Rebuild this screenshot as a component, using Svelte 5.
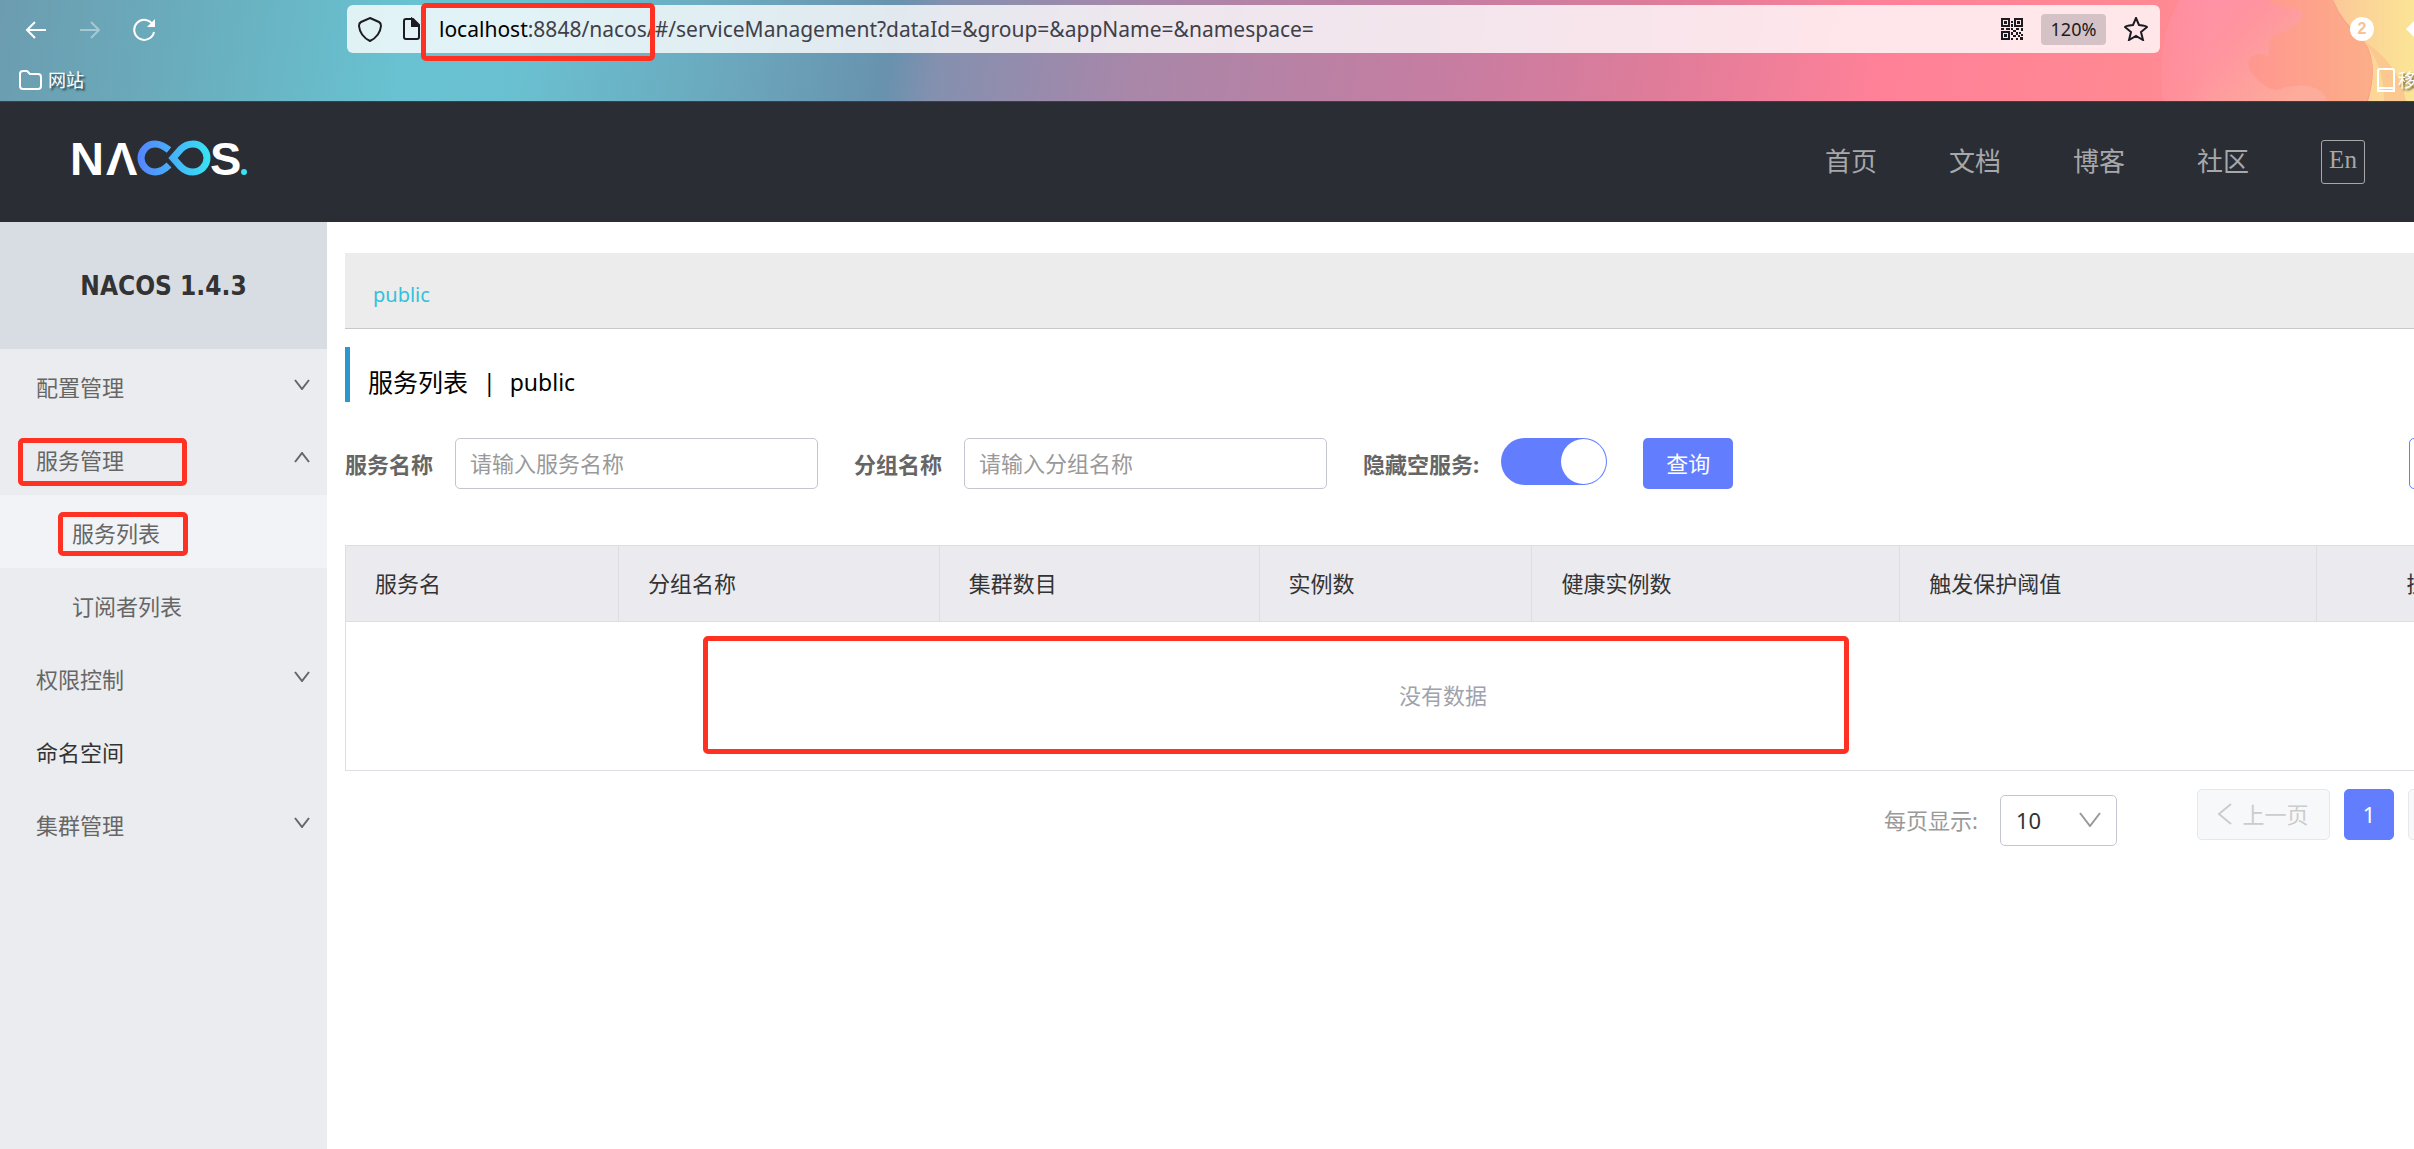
<script lang="ts">
  let serviceName = '';
  let groupName = '';
  let hideEmpty = true;
  let pageSize = '10';

  const navLinks = ['首页', '文档', '博客', '社区'];

  const menu = [
    { title: '配置管理', open: false, children: [] },
    {
      title: '服务管理',
      open: true,
      marked: true,
      children: [
        { title: '服务列表', active: true },
        { title: '订阅者列表', active: false }
      ]
    },
    { title: '权限控制', open: false, children: [] },
    { title: '命名空间', link: true, children: [] },
    { title: '集群管理', open: false, children: [] }
  ];

  const columns = [
    { title: '服务名', size: 273 },
    { title: '分组名称', size: 321 },
    { title: '集群数目', size: 320 },
    { title: '实例数', size: 273 },
    { title: '健康实例数', size: 368 },
    { title: '触发保护阈值', size: 417 },
    { title: '操作', size: 224, center: true }
  ];
  const total = columns.reduce((sum, c) => sum + c.size, 0);
</script>

<div class="page">
  <div class="browser">
    <svg class="theme" viewBox="0 0 284 101" preserveAspectRatio="none" aria-hidden="true">
      <defs>
        <linearGradient id="fur" x1="30" y1="0" x2="150" y2="110" gradientUnits="userSpaceOnUse">
          <stop offset="0" stop-color="#ff8fab" />
          <stop offset="0.5" stop-color="#ff959f" />
          <stop offset="1" stop-color="#fdab9a" />
        </linearGradient>
        <linearGradient id="furEdge" x1="26" y1="0" x2="80" y2="0" gradientUnits="userSpaceOnUse">
          <stop offset="0" stop-color="#ff8b94" />
          <stop offset="1" stop-color="#ff8b94" stop-opacity="0" />
        </linearGradient>
        <linearGradient id="body" x1="0" y1="0" x2="1" y2="0">
          <stop offset="0" stop-color="#ff9590" />
          <stop offset="1" stop-color="#fcae88" />
        </linearGradient>
        <linearGradient id="glow" x1="0" y1="0" x2="1" y2="0">
          <stop offset="0" stop-color="#fbc898" />
          <stop offset="1" stop-color="#fbe596" />
        </linearGradient>
      </defs>
      <path d="M203 0H284V101H238Q250 60 232 38Q212 22 203 0Z" fill="url(#glow)" />
      <path d="M232 40Q254 62 254 101H276Q268 62 232 40Z" fill="#fbc98f" />
      <path d="M120 0H203Q212 24 232 38Q250 62 237 101H110Z" fill="url(#body)" />
      <path d="M50 0H138Q146 8 164 8Q176 10 171 19Q166 27 143 36Q138 42 139 57Q130 50 121 57Q114 66 126 78Q137 90 147 90Q162 84 178 86Q194 89 197 101H33Q26 40 50 0Z" fill="url(#fur)" />
      <path d="M50 0H90V101H33Q26 40 50 0Z" fill="url(#furEdge)" opacity="0.7" />
    </svg>

    <div class="nav-row">
      <div class="nav-buttons">
        <button type="button" aria-label="Back">
          <svg width="22" height="20" viewBox="0 0 22 20"><path d="M21 10H2M10 2L2 10L10 18" /></svg>
        </button>
        <button type="button" aria-label="Forward" class="dim">
          <svg width="22" height="20" viewBox="0 0 22 20"><path d="M1 10H20M12 2L20 10L12 18" /></svg>
        </button>
        <button type="button" aria-label="Reload">
          <svg width="24" height="24" viewBox="0 0 24 24"><path d="M20 7A10 10 0 1 0 21 14" /><path d="M22 1V9H14Z" fill="#fff" stroke="none" /></svg>
        </button>
      </div>

      <div class="url-bar">
        <svg width="24" height="26" viewBox="0 0 24 26"><path d="M12 2L21 6Q23 7 23 10Q22 20 12 25Q2 20 1 10Q1 7 3 6Z" /></svg>
        <svg class="doc" width="18" height="24" viewBox="0 0 18 24"><path d="M11 2H4Q2 2 2 4V20Q2 22 4 22H15Q17 22 17 20V8Z" /><path d="M10 2V9H17Z" fill="#1c1b22" /></svg>
        <div class="address" role="textbox" tabindex="0" aria-label="Address"><b>localhost</b>:8848/nacos/#/serviceManagement?dataId=&amp;group=&amp;appName=&amp;namespace=</div>
        <span class="mark mark-url"></span>
        <button type="button" aria-label="QR code">
          <svg width="22" height="22" viewBox="0 0 22 22">
            <path d="M1 1H8V8H1ZM14 1H21V8H14ZM1 14H8V21H1Z" />
            <path class="solid" d="M3 3h3v3h-3zM16 3h3v3h-3zM3 16h3v3h-3zM10 3h2v2h-2zM10 6h2v3h-2zM0 10h3v2h-3zM5 10h4v2h-4zM10 10h2v2h-2zM12 12h3v2h-3zM15 10h3v2h-3zM20 10h2v3h-2zM10 14h2v3h-2zM12 17h3v2h-3zM15 14h2v3h-2zM18 14h2v2h-2zM20 16h2v2h-2zM17 17h2v2h-2zM10 20h2v2h-2zM15 20h2v2h-2zM19 19h3v3h-3z" />
          </svg>
        </button>
        <button type="button" class="zoom">120%</button>
        <button type="button" aria-label="Bookmark this page">
          <svg width="24" height="24" viewBox="0 0 24 24"><path d="M12 1L15 8Q23 9 23 10L17 15L19 23L12 19L5 23L7 15L1 10Q1 9 9 8Z" /></svg>
        </button>
      </div>

      <div class="extras">
        <span class="badge">2</span>
        <svg width="22" height="22" viewBox="0 0 22 22"><path d="M11 0L22 11L11 22L0 11Z" fill="#fff" stroke="none" /></svg>
      </div>
    </div>

    <div class="bookmarks">
      <a href="#sites">
        <svg width="23" height="20" viewBox="0 0 23 20"><path d="M1 4Q1 1 4 1H8L11 4H19Q22 4 22 7V16Q22 19 19 19H4Q1 19 1 16Z" /></svg>
        网站
      </a>
      <a href="#mobile" class="mobile">
        <svg width="18" height="24" viewBox="0 0 18 24"><rect x="1" y="1" width="16" height="22" rx="2" /><path d="M1 20H17V23H1Z" /></svg>
        移动设备
      </a>
    </div>
  </div>

  <header>
    <a href="#home" class="logo" aria-label="Nacos">
      <svg width="176" height="38" viewBox="0 0 176 38">
        <defs>
          <linearGradient id="loop" x1="66" y1="0" x2="138" y2="0" gradientUnits="userSpaceOnUse">
            <stop offset="0" stop-color="#5584ff" />
            <stop offset="1" stop-color="#37e3f3" />
          </linearGradient>
        </defs>
        <text x="-2" y="35">N</text>
        <text x="34" y="35">Λ</text>
        <path d="M97 10C92 6 88 4 83 4C75 4 69 11 69 18C69 25 75 32 83 32C88 32 92 30 97 25" />
        <path d="M101 18L109 9C112 6 116 4 121 4C129 4 135 11 135 18C135 25 129 32 121 32C116 32 112 30 109 27Z" />
        <text x="138" y="35">S</text>
        <circle cx="172" cy="32" r="3" />
      </svg>
    </a>
    <nav>
      {#each navLinks as link}
        <a href="#nav">{link}</a>
      {/each}
      <button type="button" class="lang">En</button>
    </nav>
  </header>

  <div class="body">
    <aside>
      <h1>NACOS 1.4.3</h1>
      <ul>
        {#each menu as item}
          <li>
            {#if item.link}
              <a href="#namespace" class="row dark"><span>{item.title}</span></a>
            {:else}
              <button type="button" class="row">
                <span>{item.title}</span>
                <svg class:up={item.open} width="16" height="11" viewBox="0 0 16 11"><path d="M1 1L8 10L15 1" /></svg>
                {#if item.marked}<i class="mark mark-group"></i>{/if}
              </button>
            {/if}
            {#each item.children as child}
              <a href="#service" class="row child" class:active={child.active}>
                <span>{child.title}</span>
                {#if child.active}<i class="mark mark-item"></i>{/if}
              </a>
            {/each}
          </li>
        {/each}
      </ul>
    </aside>

    <main>
      <div class="content">
        <div class="namespaces"><a href="#public">public</a></div>

        <h2>服务列表<span class="bar">|</span><span class="latin">public</span></h2>

        <form on:submit|preventDefault>
          <label for="service">服务名称</label>
          <input id="service" type="text" placeholder="请输入服务名称" bind:value={serviceName} />
          <label for="group">分组名称</label>
          <input id="group" type="text" placeholder="请输入分组名称" bind:value={groupName} />
          <label for="hide">隐藏空服务:</label>
          <input id="hide" type="checkbox" class="switch" bind:checked={hideEmpty} />
          <button type="submit" class="primary">查询</button>
          <button type="button" class="create">创建服务</button>
        </form>

        <div class="table-wrap">
          <table>
            <colgroup>
              {#each columns as col}
                <col style="width: {(col.size / total) * 100}%" />
              {/each}
            </colgroup>
            <thead>
              <tr>
                {#each columns as col}
                  <th class:center={col.center}>{col.title}</th>
                {/each}
              </tr>
            </thead>
            <tbody>
              <tr><td colspan={columns.length}>没有数据</td></tr>
            </tbody>
          </table>
          <span class="mark mark-empty"></span>
        </div>

        <div class="pagination">
          <label for="size">每页显示:</label>
          <div class="select">
            <select id="size" bind:value={pageSize}>
              <option>10</option>
              <option>20</option>
              <option>30</option>
            </select>
            <svg width="22" height="15" viewBox="0 0 22 15"><path d="M1 1L11 14L21 1" /></svg>
          </div>
          <div class="pages">
            <button type="button" disabled>
              <svg width="14" height="22" viewBox="0 0 14 22"><path d="M13 1L1 11L13 21" /></svg>
              上一页
            </button>
            <button type="button" class="current">1</button>
            <button type="button" disabled>
              下一页
              <svg width="14" height="22" viewBox="0 0 14 22"><path d="M1 1L13 11L1 21" /></svg>
            </button>
          </div>
        </div>
      </div>
    </main>
  </div>
</div>

<style>
  :global(body) {
    margin: 0;
    background: #fff;
  }
  .page {
    display: flex;
    flex-direction: column;
    min-height: 100vh;
    overflow: hidden;
    font-family: 'Noto Sans', 'Noto Sans CJK SC', sans-serif;
    font-size: 22px;
    line-height: 32px;
    color: #333;
  }
  .page * {
    box-sizing: border-box;
  }
  button,
  input,
  select {
    font: inherit;
    color: inherit;
    margin: 0;
  }
  button {
    padding: 0;
    border: 0;
    background: none;
    cursor: pointer;
  }
  a {
    color: inherit;
    text-decoration: none;
  }
  svg {
    flex: none;
    fill: none;
    stroke: currentColor;
    stroke-width: 2;
  }
  .mark {
    position: absolute;
    border: 5px solid #ff3122;
    border-radius: 5px;
    pointer-events: none;
  }

  /* browser chrome */
  .browser {
    position: relative;
    background: linear-gradient(100deg, #6c9cb0 0%, #6aabbb 7%, #68c2d1 17%, #6ac0d0 22%, #6ba6bc 31%, #6892ae 37%, #8490af 39%, #a887a9 47%, #c67da1 60%, #e07c9a 69%, #ff8198 78%, #ff8a92 90%, #ff8f8c 100%);
    border-bottom: 1px solid #3c4048;
    color: #fff;
  }
  .theme {
    position: absolute;
    top: 0;
    right: 0;
    width: 284px;
    height: 100%;
    stroke: none;
  }
  .nav-row {
    position: relative;
    display: flex;
    align-items: center;
    height: 58px;
  }
  .nav-buttons {
    display: flex;
    align-items: center;
    gap: 32px;
    width: 347px;
    padding: 2px 0 0 25px;
  }
  .nav-buttons button,
  .url-bar button {
    display: flex;
    align-items: center;
  }
  .dim {
    opacity: 0.4;
  }
  .url-bar {
    position: relative;
    display: flex;
    flex: 1;
    align-items: center;
    height: 48px;
    padding: 0 12px 0 11px;
    border-radius: 6px;
    background: rgba(255, 255, 255, 0.8);
    color: #1c1b22;
  }
  .doc {
    margin-left: 20px;
  }
  .address {
    flex: 1;
    margin-left: 19px;
    font-size: 21px;
    color: #40404a;
    white-space: nowrap;
    outline: none;
  }
  .address b {
    font-weight: 400;
    color: #000;
  }
  .mark-url {
    top: -2px;
    left: 74px;
    width: 234px;
    height: 58px;
  }
  .solid {
    fill: currentColor;
    stroke: none;
  }
  .url-bar .zoom {
    justify-content: center;
    width: 65px;
    height: 31px;
    margin: 0 18px;
    border-radius: 4px;
    background: #d5c2c6;
    font-size: 18px;
  }
  .extras {
    display: flex;
    align-items: center;
    gap: 32px;
    width: 254px;
    padding-left: 190px;
  }
  .badge {
    flex: none;
    width: 24px;
    height: 24px;
    border-radius: 50%;
    background: #fff;
    color: #fcc095;
    font: 700 16px/24px 'Liberation Sans', sans-serif;
    text-align: center;
  }
  .bookmarks {
    position: relative;
    display: flex;
    justify-content: space-between;
    height: 43px;
    padding-left: 19px;
    font-size: 18px;
    text-shadow: 2px 2px 2px rgba(0, 0, 0, 0.6);
  }
  .bookmarks a {
    display: flex;
    align-items: center;
    gap: 6px;
    white-space: nowrap;
  }
  .bookmarks .mobile {
    gap: 3px;
    width: 37px;
  }

  /* site header */
  header {
    display: flex;
    align-items: center;
    justify-content: space-between;
    height: 120px;
    padding: 0 49px 0 72px;
    background: #2a2e34;
  }
  .logo {
    display: flex;
    margin-bottom: 6px;
  }
  .logo svg {
    overflow: visible;
  }
  .logo text {
    font: 700 47px 'Liberation Sans', sans-serif;
    fill: #fff;
    stroke: none;
  }
  .logo path {
    stroke: url(#loop);
    stroke-width: 7;
  }
  .logo circle {
    fill: #37e3f3;
    stroke: none;
  }
  nav {
    display: flex;
    align-items: center;
    gap: 72px;
    font-size: 26px;
    color: #a6a8aa;
  }
  nav a {
    margin-bottom: 3px;
  }
  .lang {
    width: 44px;
    height: 44px;
    padding-bottom: 4px;
    border: 1px solid #a6a8aa;
    border-radius: 3px;
    font: 25px 'Liberation Serif', serif;
  }

  /* sidebar */
  .body {
    display: flex;
    flex: 1;
  }
  aside {
    flex: none;
    width: 327px;
    background: #eaecef;
  }
  h1 {
    height: 127px;
    margin: 0;
    padding-top: 2px;
    background: #d8dce3;
    font: 700 26px/125px 'DejaVu Sans Condensed', 'DejaVu Sans', sans-serif;
    text-align: center;
  }
  ul {
    margin: 0;
    padding: 0;
    list-style: none;
  }
  .row {
    position: relative;
    display: flex;
    align-items: center;
    justify-content: space-between;
    width: 100%;
    height: 73px;
    padding: 0 17px 2px 36px;
    color: #666;
  }
  .row span {
    padding-top: 4px;
  }
  .dark {
    color: #333;
  }
  .child {
    padding-left: 72px;
  }
  .active {
    background: #f1f3f7;
  }
  .up {
    transform: rotate(180deg);
  }
  .mark-group {
    top: 16px;
    left: 18px;
    width: 169px;
    height: 48px;
  }
  .mark-item {
    top: 17px;
    left: 58px;
    width: 130px;
    height: 44px;
  }

  /* the content runs past the right edge of the window */
  main {
    flex: 1;
    min-width: 0;
    padding: 31px 0 0 18px;
  }
  .content {
    margin-right: -127px;
  }
  .namespaces {
    height: 76px;
    padding: 26px 28px 0;
    border-bottom: 1px solid #c7c7c7;
    background: #ececec;
    font-size: 20px;
    color: #33c1dd;
  }
  .namespaces a {
    display: inline-block;
  }
  h2 {
    display: flex;
    align-items: center;
    height: 55px;
    margin: 18px 0 36px;
    padding: 14px 0 0 18px;
    border-left: 5px solid #2b97cd;
    font-size: 25px;
    font-weight: 400;
    color: #000;
  }
  .bar {
    margin: 0 14px 0 15px;
    font-size: 23px;
  }
  .latin {
    font-size: 23px;
  }
  form {
    display: flex;
    align-items: center;
  }
  form label {
    margin-right: 22px;
    font-weight: 700;
    color: #666;
  }
  input[type='text'] {
    width: 363px;
    height: 51px;
    margin-right: 36px;
    padding: 0 14px 2px;
    border: 1px solid #c4c6cf;
    border-radius: 5px;
    background: #fff;
  }
  input::placeholder {
    color: #999;
    opacity: 1;
  }
  .switch {
    appearance: none;
    width: 106px;
    height: 47px;
    margin: 0 36px 4px 0;
    padding: 1px;
    border-radius: 24px;
    background: #c4c6cf;
    cursor: pointer;
  }
  .switch::before {
    content: '';
    display: block;
    width: 45px;
    height: 45px;
    border-radius: 50%;
    background: #fff;
  }
  .switch:checked {
    background: #627eff;
  }
  .switch:checked::before {
    margin-left: auto;
  }
  .primary,
  .create {
    width: 90px;
    height: 51px;
    padding-bottom: 2px;
    border-radius: 5px;
    background: #627eff;
    color: #fff;
  }
  .create {
    width: 132px;
    margin-left: auto;
    border: 1px solid #627eff;
    background: #fff;
    color: #627eff;
  }
  .table-wrap {
    position: relative;
    margin-top: 56px;
  }
  table {
    width: 100%;
    table-layout: fixed;
    border-collapse: collapse;
    border: 1px solid #dcdee3;
  }
  th {
    height: 76px;
    padding: 0 29px 2px;
    border: 1px solid #dcdee3;
    background: #ebeaef;
    font-weight: 400;
    text-align: left;
  }
  .center {
    text-align: center;
  }
  td {
    height: 149px;
    padding: 0 0 2px;
    text-align: center;
    color: #a0a2ad;
  }
  .mark-empty {
    top: 91px;
    left: 358px;
    width: 1146px;
    height: 118px;
  }
  .pagination {
    display: flex;
    align-items: flex-start;
    justify-content: flex-end;
    padding-top: 18px;
    color: #999;
  }
  .pagination label {
    margin: 15px 22px 0 0;
  }
  .select {
    position: relative;
    width: 117px;
    margin: 6px 80px 0 0;
  }
  select {
    display: block;
    appearance: none;
    width: 100%;
    height: 51px;
    padding: 0 15px 2px;
    border: 1px solid #c4c6cf;
    border-radius: 5px;
    background: #fff;
    color: #333;
  }
  .select svg {
    position: absolute;
    top: 17px;
    right: 16px;
    pointer-events: none;
  }
  .pages {
    display: flex;
    gap: 14px;
  }
  .pages button {
    display: flex;
    align-items: center;
    justify-content: center;
    gap: 10px;
    width: 133px;
    height: 51px;
    padding-bottom: 2px;
    border: 1px solid #e6e7eb;
    border-radius: 5px;
    background: #f7f8fa;
    color: #ccc;
  }
  .pages .current {
    width: 50px;
    border-color: #627eff;
    background: #627eff;
    color: #fff;
  }
</style>
